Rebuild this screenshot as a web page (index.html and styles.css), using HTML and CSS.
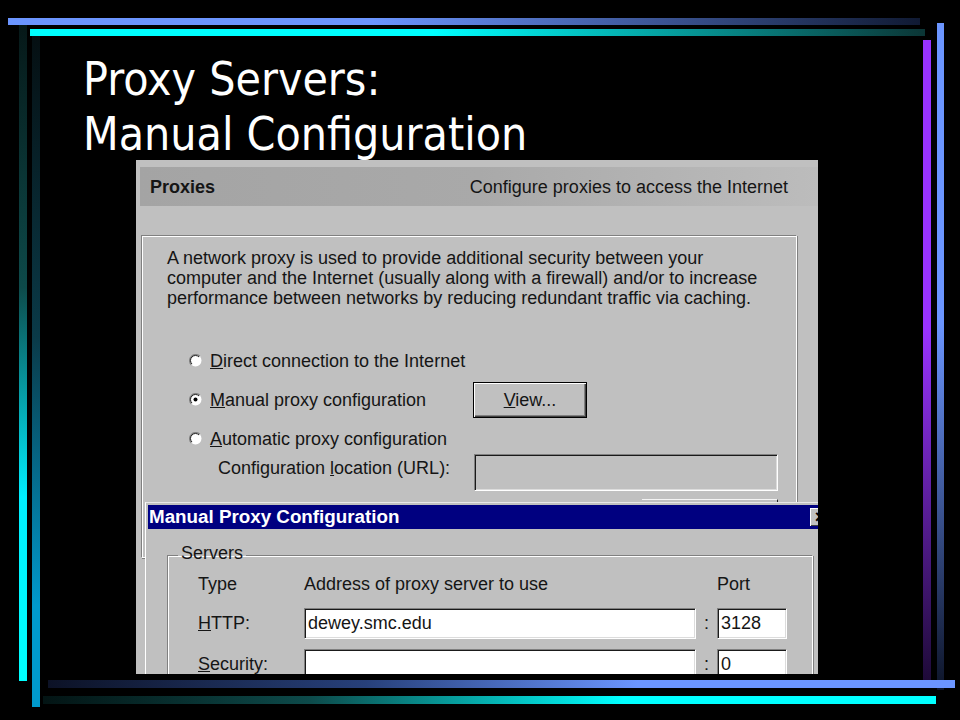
FILE: index.html
```html
<!DOCTYPE html>
<html lang="en">
<head>
<meta charset="utf-8">
<title>Proxy Servers: Manual Configuration</title>
<link rel="stylesheet" href="styles.css">
</head>
<body>
<div class="slide">
  <h1 class="title">Proxy Servers:<br>Manual Configuration</h1>
  <div class="shot">
    <div class="hdr"><b>Proxies</b><span>Configure proxies to access the Internet</span></div>
    <div class="group">
      <p class="intro">A network proxy is used to provide additional security between your<br>computer and the Internet (usually along with a firewall) and/or to increase<br>performance between networks by reducing redundant traffic via caching.</p>
      <div class="opt r1">
        <svg class="radio" viewBox="0 0 13 13" width="13" height="13"><circle cx="6.5" cy="6.5" r="6" fill="#fff"/><path d="M10.74 2.26A6 6 0 0 0 2.26 10.74" fill="none" stroke="#808080" stroke-width="1.4"/><path d="M10.04 2.96A5 5 0 0 0 2.96 10.04" fill="none" stroke="#222" stroke-width="1"/></svg>
        <span class="lbl"><u>D</u>irect connection to the Internet</span>
      </div>
      <div class="opt r2">
        <svg class="radio" viewBox="0 0 13 13" width="13" height="13"><circle cx="6.5" cy="6.5" r="6" fill="#fff"/><path d="M10.74 2.26A6 6 0 0 0 2.26 10.74" fill="none" stroke="#808080" stroke-width="1.4"/><path d="M10.04 2.96A5 5 0 0 0 2.96 10.04" fill="none" stroke="#222" stroke-width="1"/><circle cx="6.5" cy="6.5" r="2" fill="#000"/></svg>
        <span class="lbl"><u>M</u>anual proxy configuration</span>
        <div class="btn def"><u>V</u>iew...</div>
      </div>
      <div class="opt r3">
        <svg class="radio" viewBox="0 0 13 13" width="13" height="13"><circle cx="6.5" cy="6.5" r="6" fill="#fff"/><path d="M10.74 2.26A6 6 0 0 0 2.26 10.74" fill="none" stroke="#808080" stroke-width="1.4"/><path d="M10.04 2.96A5 5 0 0 0 2.96 10.04" fill="none" stroke="#222" stroke-width="1"/></svg>
        <span class="lbl"><u>A</u>utomatic proxy configuration</span>
      </div>
      <div class="url">
        <span class="lbl">Configuration <u>l</u>ocation (URL):</span>
        <div class="field dis"></div>
      </div>
      <div class="btn hidden"></div>
    </div>
    <div class="dlg">
      <div class="tbar"><span>Manual Proxy Configuration</span><span class="x">×</span></div>
      <fieldset class="servers">
        <legend>Servers</legend>
        <div class="grid">
          <span class="head">Type</span><span class="head">Address of proxy server to use</span><span class="head"></span><span class="head">Port</span>
          <span class="row-lbl"><u>H</u>TTP:</span><div class="field">dewey.smc.edu</div><span class="colon">:</span><div class="field">3128</div>
          <span class="row-lbl"><u>S</u>ecurity:</span><div class="field"></div><span class="colon">:</span><div class="field">0</div>
        </div>
      </fieldset>
    </div>
  </div>
</div>
</body>
</html>
```
FILE: styles.css
```css
html, body {
  margin: 0;
  padding: 0;
  background: #000;
}

.slide {
  width: 960px;
  height: 720px;
  overflow: hidden;
  background-color: #000;
  background-repeat: no-repeat;
  background-image:
    linear-gradient(to right, #6b95ff 0%, #6b95ff 40%, #101a33 100%),
    linear-gradient(to right, #00ffff 0%, #00ffff 45%, #0b3535 100%),
    linear-gradient(to bottom, #061818 0%, #0d4a4a 40%, #00eeff 72%, #00ffff 100%),
    linear-gradient(to bottom, #050f12 0%, #0a3a48 45%, #0099cc 85%, #0099cc 100%),
    linear-gradient(to right, #0c1226 0%, #27407a 35%, #6b95ff 65%, #6b95ff 100%),
    linear-gradient(to right, #031414 0%, #0d4a4a 30%, #00ffff 65%, #00ffff 100%),
    linear-gradient(to bottom, #9933ff 0%, #9933ff 45%, #1e0a38 100%),
    linear-gradient(to bottom, #6b95ff 0%, #6b95ff 45%, #0d1428 100%);
  background-position:
    8px 18px,
    30px 29px,
    19px 25px,
    32px 36px,
    48px 680px,
    43px 696px,
    923px 40px,
    937px 23px;
  background-size:
    912px 7px,
    895px 7px,
    8px 656px,
    8px 671px,
    907px 8px,
    893px 8px,
    8px 640px,
    7px 667px;
}

.title {
  box-sizing: border-box;
  height: 160px;
  margin: 0;
  padding: 52px 0 0 83px;
  font-family: "DejaVu Sans Condensed", "DejaVu Sans", sans-serif;
  font-stretch: condensed;
  font-weight: normal;
  font-size: 46px;
  line-height: 55px;
  color: #fff;
}

.shot {
  position: relative;
  width: 682px;
  height: 514px;
  margin-left: 136px;
  overflow: hidden;
  background: #c0c0c0;
  font-family: "Liberation Sans", Arial, sans-serif;
  font-size: 18px;
  line-height: 20px;
  color: #151515;
}

.hdr {
  display: flex;
  justify-content: space-between;
  align-items: center;
  height: 39px;
  margin: 7px 0 0 4px;
  padding: 0 30px 0 10px;
  background: linear-gradient(to right, #a4a4a4 0%, #a9a9a9 50%, #bcbcbc 100%);
}

.hdr b {
  font-weight: bold;
}

.group {
  box-sizing: border-box;
  width: 656px;
  height: 323px;
  margin: 29px 0 0 5px;
  padding: 12px 0 0 25px;
  border: 1px solid #808080;
  border-right-color: #fff;
  border-bottom-color: #fff;
  box-shadow: inset 1px 1px 0 #fff, 1px 1px 0 #808080;
}

.intro {
  margin: 0;
  white-space: nowrap;
}

.opt {
  display: flex;
  align-items: center;
  margin-left: 22px;
  height: 39px;
}

.r1 {
  margin-top: 33px;
}

.r3 {
  box-sizing: border-box;
  height: 35px;
  align-items: flex-start;
  padding-top: 10px;
}

.r3 .radio {
  margin-top: 3px;
}

.radio {
  flex: 0 0 13px;
  margin-right: 8px;
}

.opt .lbl {
  flex: 0 0 263px;
  white-space: nowrap;
}

.btn {
  box-sizing: border-box;
  background: #c0c0c0;
  border: 1px solid #000;
  text-align: center;
}

.def {
  width: 114px;
  height: 36px;
  line-height: 34px;
  box-shadow: inset 1px 1px 0 #fff, inset -1px -1px 0 #404040, inset -2px -2px 0 #808080;
}

.url {
  display: flex;
  align-items: flex-start;
  height: 37px;
  padding-left: 51px;
}

.url .lbl {
  flex: 0 0 256px;
  margin-top: 4px;
  white-space: nowrap;
}

.field {
  box-sizing: border-box;
  height: 31px;
  padding: 0 3px;
  line-height: 28px;
  background: #fff;
  border-top: 1px solid #808080;
  border-left: 1px solid #808080;
  border-right: 1px solid #fff;
  border-bottom: 1px solid #fff;
  box-shadow: inset 1px 1px 0 #1a1a1a, inset -1px -1px 0 #dcdcdc;
  white-space: nowrap;
  overflow: hidden;
}

.field.dis {
  width: 304px;
  height: 37px;
  background: #c0c0c0;
}

.hidden {
  width: 136px;
  height: 30px;
  margin: 8px 0 0 475px;
  border: none;
  border-top: 1px solid #f4f4f4;
  border-right: 1px solid #222;
}

.dlg {
  position: absolute;
  left: 9px;
  top: 342px;
  width: 690px;
  height: 200px;
  padding: 2px;
  background: #c0c0c0;
  border-top: 1px solid #e8e8e8;
  border-left: 1px solid #fff;
}

.tbar {
  display: flex;
  justify-content: space-between;
  align-items: center;
  height: 24px;
  padding-left: 1px;
  background: #000080;
  color: #fff;
  font-weight: bold;
  font-size: 18.8px;
}

.tbar .x {
  width: 20px;
  height: 18px;
  margin-right: 8px;
  background: #c0c0c0;
  color: #000;
  font-size: 18px;
  line-height: 18px;
  text-align: center;
  box-shadow: inset 1px 1px 0 #fff, inset -1px -1px 0 #404040;
}

.servers {
  box-sizing: border-box;
  width: 646px;
  min-height: 170px;
  margin: 14px 0 0 19px;
  padding: 7px 0 0 30px;
  border: 1px solid #808080;
  border-right-color: #fff;
  border-bottom-color: #fff;
  box-shadow: inset 1px 1px 0 #fff, 1px 1px 0 #808080;
}

.servers legend {
  margin-left: -20px;
  padding: 0 3px 4px 3px;
  line-height: 20px;
}

.grid {
  display: grid;
  grid-template-columns: 106px 392px 21px 70px;
  grid-template-rows: 34px 41px 31px;
  align-items: start;
}

.row-lbl,
.colon {
  line-height: 31px;
}

.colon {
  text-align: center;
}
```
